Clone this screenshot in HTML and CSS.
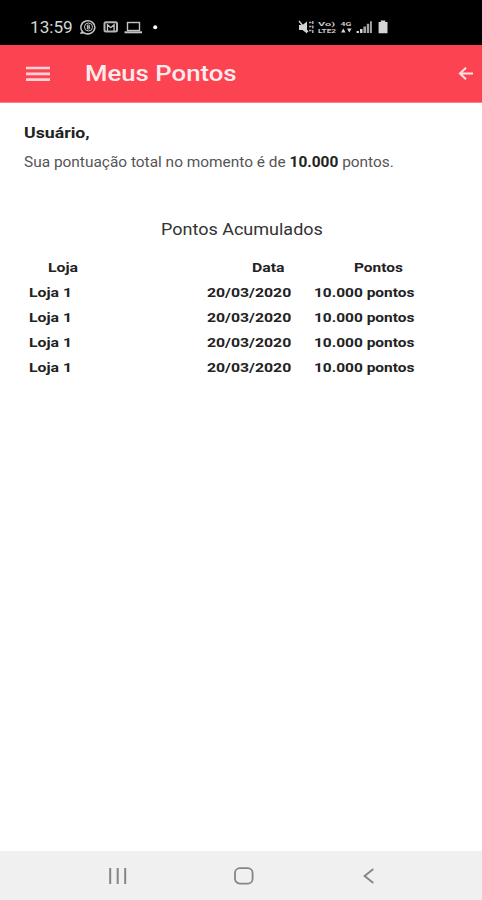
FILE: index.html
```html
<!DOCTYPE html>
<html lang="pt-BR">
<head>
<meta charset="utf-8">
<title>Meus Pontos</title>
<link rel="stylesheet" href="styles.css">
</head>
<body>
<div class="screen">
  <div class="status">
    <span class="clock"><span class="wide">13:59</span></span>
    <svg class="left-icons" width="80" height="16" viewBox="0 0 80 16" fill="none" stroke="#c4c4c4">
      <path d="M2.6 12.6 1 14l3.1-.2A7 6.5 0 1 0 2.6 12.6Z" stroke-width="1.5"/>
      <ellipse cx="8.5" cy="8" rx="4" ry="4" stroke-width="1"/>
      <path d="M7.4 10V6h1.3a1 1 0 0 1 0 2H7.4h1.5a1 1 0 0 1 0 2Z" stroke-width="1"/>
      <rect x="24.5" y="3.2" width="12.5" height="9.2" rx="1.5" stroke-width="2" stroke="#b4b4b4"/>
      <path d="M27.5 12V5.7l3.3 3 3.3-3V12" stroke-width="1.3"/>
      <rect x="47.5" y="3.5" width="12" height="8" stroke-width="1.4"/>
      <path d="M44.5 13.3h17.5" stroke-width="2"/>
      <circle cx="75.2" cy="8.3" r="2" fill="#fff" stroke="none"/>
    </svg>
    <svg class="right-icons" width="92" height="16" viewBox="0 0 92 16" fill="#d4d4d4">
      <path d="M1 6h3.5L9 2.5v12L4.5 11H1Z"/>
      <path d="m1 2 9 11" stroke="#d4d4d4" stroke-width="1.3"/>
      <path d="M11 3.5h2.5M11 7.5h2.5M11 11.5h2.5M14.8 2v3M14.8 6.5v3M14.8 11v3" stroke="#aaa" stroke-width="1.5"/>
      <text x="20" y="7" textLength="17" lengthAdjust="spacingAndGlyphs" class="tiny">Vo)</text>
      <text x="20" y="14.2" textLength="18" lengthAdjust="spacingAndGlyphs" class="tiny">LTE2</text>
      <text x="42.5" y="7.2" textLength="11" lengthAdjust="spacingAndGlyphs" class="tiny">4G</text>
      <path d="m43 13.5 2.3-4 2.3 4ZM49 9.5h4.6l-2.3 4Z"/>
      <path d="M58.5 12h2.5v2h-2.5ZM62 10h2.5v4H62Z"/>
      <path d="M65.4 7.5H68V14h-2.6ZM68.8 4.8h2.4V14h-2.4ZM72 2.2h1.9V14H72Z" fill="#a4a4a4"/>
      <path d="M80.6 3h2.2V1.5h4.4V3h2.3v11.3h-8.9Z"/>
    </svg>
  </div>
  <header class="bar">
    <svg class="menu" width="24" height="16" viewBox="0 0 24 16"><path d="M0 2h24M0 7.8h24M0 13.6h24" stroke="#ffd4d8" stroke-width="2.7"/></svg>
    <h1 class="title"><span class="wide">Meus Pontos</span></h1>
    <svg class="back" width="16" height="14" viewBox="0 0 16 14" fill="none" stroke="#ffe2e4" stroke-width="2"><path d="M15 6.5H2M8 .8 1.9 6.5 8 12.2"/></svg>
  </header>
  <main class="content">
    <p class="user"><span class="wide">Usuário,</span></p>
    <p class="total"><span class="wide">Sua pontuação total no momento é de <b>10.000</b> pontos.</span></p>
    <h2 class="subtitle"><span class="wide">Pontos Acumulados</span></h2>
    <div class="table">
      <div class="row head"><span class="wide">Loja</span><span class="wide">Data</span><span class="wide">Pontos</span></div>
      <div class="row"><span class="wide">Loja 1</span><span class="wide">20/03/2020</span><span class="wide">10.000 pontos</span></div>
      <div class="row"><span class="wide">Loja 1</span><span class="wide">20/03/2020</span><span class="wide">10.000 pontos</span></div>
      <div class="row"><span class="wide">Loja 1</span><span class="wide">20/03/2020</span><span class="wide">10.000 pontos</span></div>
      <div class="row"><span class="wide">Loja 1</span><span class="wide">20/03/2020</span><span class="wide">10.000 pontos</span></div>
    </div>
  </main>
  <nav class="nav">
    <svg width="18" height="16" viewBox="0 0 18 16" stroke="#858585" stroke-width="2"><path d="M1.2 0v16M8.7 0v16M16.2 0v16"/></svg>
    <svg class="home" width="20" height="18" viewBox="0 0 20 18" fill="none" stroke="#858585" stroke-width="1.8"><rect x="1" y="1.2" width="17.6" height="15.4" rx="4.8"/></svg>
    <svg width="12" height="16" viewBox="0 0 12 16" fill="none" stroke="#858585" stroke-width="1.9"><path d="M10.3 1 1.6 8l8.7 7"/></svg>
  </nav>
</div>
</body>
</html>
```

FILE: styles.css
```css
* { box-sizing: border-box; }
body { margin: 0; font-family: Roboto, "Liberation Sans", sans-serif; background: #fff; }
.screen { width: 482px; height: 900px; display: flex; flex-direction: column; overflow: hidden; }
.wide { display: inline-block; white-space: nowrap; transform: scaleX(var(--stretch, 1.2)); transform-origin: left center; }
.status { height: 45px; background: #000; display: flex; padding: 19px 0 0 30px; }
.clock { width: 50px; font-size: 16.5px; line-height: 18px; color: #d6d6d6; --stretch: 1.04; }
.left-icons { flex: none; }
.right-icons { flex: none; margin-left: 138px; }
.tiny { font-size: 6px; font-weight: 700; fill: #c8c8c8; }
.bar { height: 58px; background: #fb4351; border-bottom: 1px solid #fc8089; display: flex; align-items: center; padding: 0 8px 0 26px; }
.menu { flex: none; }
.title { flex: 1; margin: 0 0 0 35px; font-size: 22px; line-height: 28px; font-weight: 500; color: #ffebed; --stretch: 1.17; }
.back { flex: none; }
.content { flex: 1; padding: 20px 24px 0; color: #333; }
.content p { margin: 0; }
.user { font-size: 15px; line-height: 20px; font-weight: 700; color: #222; --stretch: 1.18; }
.content .total { margin-top: 9px; font-size: 14px; line-height: 20px; color: #555; --stretch: 1.102; }
.total b { color: #222; }
.subtitle { margin: 47px 0 0 137px; font-size: 16px; line-height: 22px; font-weight: 400; color: #333; --stretch: 1.125; }
.table { margin-top: 14px; font-size: 13.5px; font-weight: 700; color: #222; --stretch: 1.17; }
.row { display: grid; grid-template-columns: 178px 107px 130px; height: 24.9px; line-height: 24px; padding-left: 5px; }
.row .wide:last-child { --stretch: 1.145; }
.head { grid-template-columns: 204px 102px 80px; padding-left: 24px; }
.row .wide { justify-self: start; }
.nav { height: 49px; background: #f0f0f0; display: flex; align-items: center; justify-content: space-between; padding: 0 107px 0 109px; }
.home { margin-right: 3px; }
```
